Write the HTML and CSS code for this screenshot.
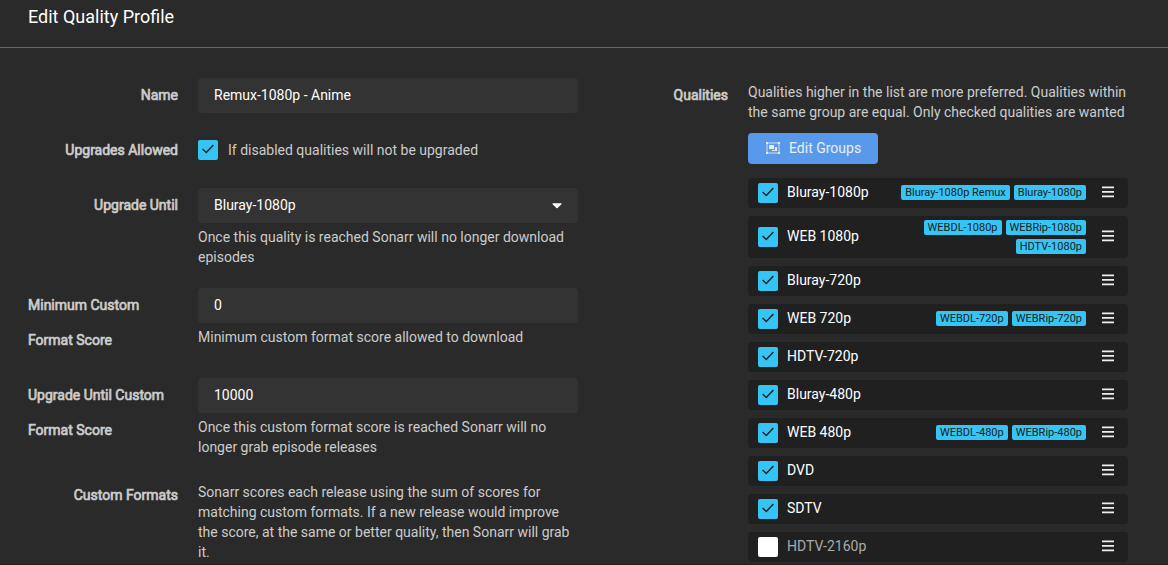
FILE: index.html
```html
<!DOCTYPE html>
<html lang="en">
<head>
<meta charset="utf-8">
<title>Edit Quality Profile</title>
<link rel="stylesheet" href="styles.css">
</head>
<body>
<svg class="defs" width="0" height="0">
  <symbol id="check" viewBox="0 0 12 10"><path d="M.6 5 4.3 8.500 11.4 1.1" fill="none" stroke="currentColor" stroke-width="1.5"/></symbol>
  <symbol id="bars" viewBox="0 0 12 12"><path d="M0 .5h12v1.700H0zM0 5h12v1.700H0zM0 9.500h12v1.700H0z" fill="currentColor"/></symbol>
</svg>
<div class="modal">
  <header class="modal-header">Edit Quality Profile</header>
  <main class="modal-body">
    <section class="settings">
      <div class="form-group name">
        <label class="label">Name</label>
        <div class="field"><div class="input">Remux-1080p - Anime</div></div>
      </div>
      <div class="form-group upgrades">
        <label class="label">Upgrades Allowed</label>
        <div class="field inline"><span class="checkbox checked"><svg><use href="#check"/></svg></span><span class="help">If disabled qualities will not be upgraded</span></div>
      </div>
      <div class="form-group until">
        <label class="label">Upgrade Until</label>
        <div class="field"><div class="input select">Bluray-1080p<svg class="caret" viewBox="0 0 10 6"><path d="M1 .2h8q1 .2.4 1L5.6 5q-.6.6-1.2 0L.6 1.200Q0 .4 1 .2z" fill="currentColor"/></svg></div>
        <p class="help">Once this quality is reached Sonarr will no longer download<br>episodes</p></div>
      </div>
      <div class="form-group minimum">
        <label class="label multi">Minimum Custom<br>Format Score</label>
        <div class="field"><div class="input">0</div><p class="help">Minimum custom format score allowed to download</p></div>
      </div>
      <div class="form-group maximum">
        <label class="label multi">Upgrade Until Custom<br>Format Score</label>
        <div class="field"><div class="input">10000</div><p class="help">Once this custom format score is reached Sonarr will no<br>longer grab episode releases</p></div>
      </div>
      <div class="form-group">
        <label class="label">Custom Formats</label>
        <div class="field"><p class="help">Sonarr scores each release using the sum of scores for<br>matching custom formats. If a new release would improve<br>the score, at the same or better quality, then Sonarr will grab<br>it.</p></div>
      </div>
    </section>
    <section class="qualities">
      <label class="label">Qualities</label>
      <div class="quality-content">
        <p class="help">Qualities higher in the list are more preferred. Qualities within<br>the same group are equal. Only checked qualities are wanted</p>
        <button class="button"><svg class="group-icon" viewBox="0 0 14 12"><path d="M1 1h12v10H1z" fill="none" stroke="currentColor" stroke-opacity=".8"/><path d="M0 0h2v2H0zM12 0h2v2h-2zM0 10h2v2H0zM12 10h2v2h-2zM3 3h5v4H3zM9 5h2v4H6V8h3z" fill="currentColor"/></svg>Edit Groups</button>
        <div class="quality-list">
          <div class="quality"><span class="checkbox checked"><svg><use href="#check"/></svg></span><span class="title">Bluray-1080p</span><div class="tags"><span class="tag">Bluray-1080p Remux</span><span class="tag">Bluray-1080p</span></div><svg class="handle"><use href="#bars"/></svg></div>
          <div class="quality tall"><span class="checkbox checked"><svg><use href="#check"/></svg></span><span class="title">WEB 1080p</span><div class="tags"><span class="tag">WEBDL-1080p</span><span class="tag">WEBRip-1080p</span><span class="tag">HDTV-1080p</span></div><svg class="handle"><use href="#bars"/></svg></div>
          <div class="quality"><span class="checkbox checked"><svg><use href="#check"/></svg></span><span class="title">Bluray-720p</span><svg class="handle"><use href="#bars"/></svg></div>
          <div class="quality"><span class="checkbox checked"><svg><use href="#check"/></svg></span><span class="title">WEB 720p</span><div class="tags"><span class="tag">WEBDL-720p</span><span class="tag">WEBRip-720p</span></div><svg class="handle"><use href="#bars"/></svg></div>
          <div class="quality"><span class="checkbox checked"><svg><use href="#check"/></svg></span><span class="title">HDTV-720p</span><svg class="handle"><use href="#bars"/></svg></div>
          <div class="quality"><span class="checkbox checked"><svg><use href="#check"/></svg></span><span class="title">Bluray-480p</span><svg class="handle"><use href="#bars"/></svg></div>
          <div class="quality"><span class="checkbox checked"><svg><use href="#check"/></svg></span><span class="title">WEB 480p</span><div class="tags"><span class="tag">WEBDL-480p</span><span class="tag">WEBRip-480p</span></div><svg class="handle"><use href="#bars"/></svg></div>
          <div class="quality"><span class="checkbox checked"><svg><use href="#check"/></svg></span><span class="title">DVD</span><svg class="handle"><use href="#bars"/></svg></div>
          <div class="quality"><span class="checkbox checked"><svg><use href="#check"/></svg></span><span class="title">SDTV</span><svg class="handle"><use href="#bars"/></svg></div>
          <div class="quality off"><span class="checkbox"></span><span class="title">HDTV-2160p</span><svg class="handle"><use href="#bars"/></svg></div>
        </div>
      </div>
    </section>
  </main>
</div>
</body>
</html>
```
FILE: styles.css
```css
* { box-sizing: border-box; }
body { margin: 0; background: #2a2a2a; color: #ccc; font: 14px/20px Roboto, "Liberation Sans", sans-serif; overflow: hidden; }
p { margin: 0; }
.defs { display: block; }
.modal { height: 565px; overflow: hidden; border-bottom: 1px solid #211f20; }
.modal-header { height: 48px; padding: 5px 28px 0; border-bottom: 1px solid #656565; color: #fff; font-size: 18px; line-height: 24px; }
.modal-body { display: flex; padding: 30px 40px 0 28px; }
.settings { width: 550px; flex: none; }
.form-group { display: flex; gap: 20px; }
.name, .upgrades { height: 55px; }
.until { height: 100px; }
.minimum { height: 90px; }
.maximum { height: 100px; }
.label { width: 150px; flex: none; text-align: right; line-height: 35px; -webkit-text-stroke: .7px currentColor; }
.label.multi { text-align: left; }
.field { width: 380px; }
.field > .help { margin-top: 4px; }
.inline { display: flex; height: 34px; align-items: center; gap: 10px; }
.inline > .help { margin: 0; }
.input { height: 35px; padding: 0 16px; border-radius: 4px; background: #333; color: #fff; line-height: 35px; }
.select { display: flex; align-items: center; justify-content: space-between; }
.caret { width: 10px; height: 6px; margin-top: 1px; }
.checkbox { display: flex; align-items: center; justify-content: center; flex: none; width: 20px; height: 20px; border-radius: 2px; background: #fff; color: #202020; }
.checkbox.checked { background: #35c5f4; }
.checkbox svg { width: 12px; height: 10px; margin-bottom: 2px; }
.qualities { display: flex; gap: 20px; }
.quality-content { width: 380px; padding-top: 4px; }
.button { display: flex; align-items: center; gap: 9px; width: 130px; height: 31px; margin-top: 11px; padding: 0 0 1px 18px; border: 0; border-radius: 4px; background: #5899eb; color: #eee; font: inherit; white-space: nowrap; }
.group-icon { flex: none; width: 14px; height: 12px; }
.quality-list { display: flex; flex-direction: column; gap: 8px; margin-top: 14px; }
.quality { display: flex; align-items: center; height: 30px; padding: 0 14px 2px 10px; border-radius: 4px; background: #202020; color: #fff; }
.quality.tall { height: 42px; }
.quality .checkbox { margin-top: 2px; }
.title { margin-left: 9px; white-space: nowrap; }
.off .title { color: #aaa; }
.tags { display: flex; flex-wrap: wrap; justify-content: flex-end; gap: 4px; width: 190px; margin: 1px 0 0 auto; }
.tall .tags { margin-top: 2px; }
.tag { height: 15px; padding: 0 4px; border-radius: 2px; background: #35c5f4; color: #202020; font-size: 11px; line-height: 15px; white-space: nowrap; }
.handle { width: 12px; height: 12px; margin-left: 16px; flex: none; color: #eee; }
.title + .handle { margin-left: auto; }
```
